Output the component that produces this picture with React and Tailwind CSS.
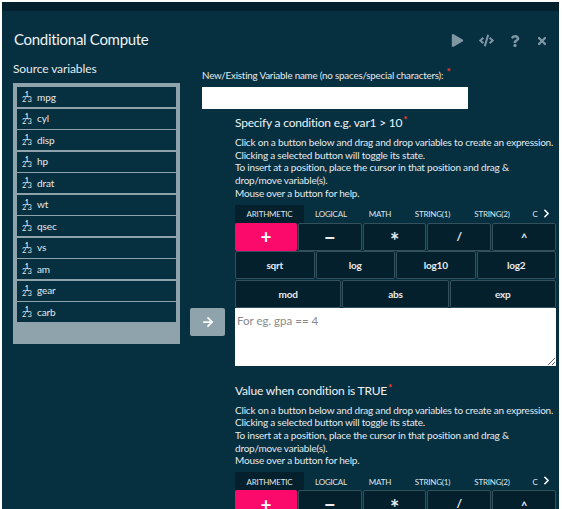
import { ArrowRight, ChevronRight } from "lucide-react";
import { FaCode, FaPlay, FaQuestion, FaTimes } from "react-icons/fa";

const variables = ["mpg", "cyl", "disp", "hp", "drat", "wt", "qsec", "vs", "am", "gear", "carb"];
const tabs = [
  ["ARITHMETIC", "w-[69px] bg-[#04202d]"],
  ["LOGICAL", "w-[54px]"],
  ["MATH", "w-[44px]"],
  ["STRING(1)", "w-[61px]"],
  ["STRING(2)", "w-[58px]"],
  ["C", "w-[28px]"],
];
const rows = [
  [
    ["+", "text-[19px]"],
    ["−", "text-[20px]"],
    ["*", "relative top-[4px] text-[22px]"],
    ["/", "text-[12px]"],
    ["^", "relative top-[1px] text-[11px]"],
  ],
  [["sqrt"], ["log"], ["log10"], ["log2"]],
  [["mod"], ["abs"], ["exp"]],
];

const Required = () => <sup className="top-[-4px] ml-[1px] text-[10px] font-bold text-[#ff3b1f]">*</sup>;

// the little 1/2/3 numeric type badge in front of each variable
const NumericIcon = () => (
  <svg width="11" height="12" viewBox="0 0 11 12" className="mr-[4px] shrink-0" fill="#e4eaed">
    <text x="0" y="11" fontSize="7.5">2</text>
    <text x="5.5" y="11" fontSize="7.5">3</text>
    <text x="3" y="5.5" fontSize="6.5" fontWeight="700">1</text>
  </svg>
);

const HelpText = () => (
  <p className="mt-[5px] whitespace-nowrap text-[10px] leading-[12.7px] tracking-[-0.2px] text-[#e4eaed]">
    Click on a button below and drag and drop variables to create an expression.
    <br />
    Clicking a selected button will toggle its state.
    <br />
    To insert at a position, place the cursor in that position and drag &amp;
    <br />
    drop/move variable(s).
    <br />
    Mouse over a button for help.
  </p>
);

const TabBar = () => (
  <div className="relative mt-[5px] flex h-[18px] w-[321px] items-center text-[8px] tracking-[-0.2px] text-[#dfe6ea]">
    {tabs.map(([tab, width]) => (
      <div key={tab} className={"flex h-full shrink-0 items-center justify-center pt-[1px] " + width}>
        {tab}
      </div>
    ))}
    <ChevronRight size={13} strokeWidth={3} className="absolute right-[3px] top-[2px] text-white" />
  </div>
);

const ButtonRows = () => (
  <div className="flex flex-col gap-[0.5px]">
    {rows.map((row, r) => (
      <div key={r} className="flex h-[28px] gap-[1px]">
        {row.map(([label, size]) => (
          <button
            key={label}
            className={
              label === "+"
                ? "flex-1 rounded-[2px] bg-[#fb0a6b] font-bold leading-none text-white"
                : "flex-1 rounded-[2px] border border-[#34505d] bg-[#04202d] text-[10px] font-bold leading-none tracking-[-0.2px] text-[#e6ecef]"
            }
          >
            <span className={size}>{label}</span>
          </button>
        ))}
      </div>
    ))}
  </div>
);

export default function App() {
  return (
    <div className="h-[509px] w-[562px] overflow-hidden bg-white pl-[2px] pr-[3px] pt-[2px] font-['Lato',sans-serif] text-white">
      <div className="h-full bg-[#062f40]">
        <div className="h-[9px] bg-[#04202d]" />

        <div className="flex h-[38px] items-end justify-between pl-[12px] pr-[11px]">
          <h1 className="text-[15px] leading-[20px] tracking-[-0.3px] text-[#eef2f4]">Conditional Compute</h1>
          <div className="mb-[1px] flex items-center gap-[15px] text-[#7e97a3]">
            <FaPlay size={13} />
            <FaCode size={15} />
            <FaQuestion size={12} />
            <FaTimes size={12} />
          </div>
        </div>

        <div className="flex">
          {/* source variables */}
          <div className="ml-[11px] mt-[12px] w-[167px] shrink-0">
            <h2 className="text-[12px] leading-[16px] tracking-[-0.1px] text-[#e4eaed]">Source variables</h2>
            <div className="mt-[6px] flex h-[261px] flex-col gap-[1.5px] bg-[#8fa3ac] p-[4px]">
              {variables.map((name) => (
                <div
                  key={name}
                  className="flex h-[20px] shrink-0 items-center bg-[#062f40] pl-[5px] text-[10px] tracking-[-0.1px] text-[#e4eaed]"
                >
                  <NumericIcon />
                  {name}
                </div>
              ))}
            </div>
          </div>

          {/* move arrow */}
          <div className="ml-[10px] mt-[259px] flex h-[28px] w-[35px] shrink-0 items-center justify-center self-start rounded-[2px] bg-[#8fa3ac]">
            <ArrowRight size={14} strokeWidth={3} className="text-white" />
          </div>

          <div className="-ml-[23px] mt-[20px] flex-1">
            <label className="block whitespace-nowrap text-[9.8px] leading-[13px] tracking-[-0.2px] text-[#e4eaed]">
              New/Existing Variable name (no spaces/special characters): <Required />
            </label>
            <input className="mt-[5px] block h-[22px] w-[266px] bg-white" />

            <div className="ml-[33px] mt-[6px] w-[321px]">
              <h3 className="text-[12px] leading-[16px] tracking-[-0.2px] text-[#eef2f4]">
                Specify a condition e.g. var1 &gt; 10<Required />
              </h3>
              <HelpText />
              <TabBar />
              <ButtonRows />
              <textarea
                placeholder="For eg. gpa == 4"
                className="block h-[58px] w-full bg-white px-[2px] py-[4px] text-[11.5px] text-black placeholder:text-[#8a8a8a]"
              />

              <h3 className="mt-[17px] text-[12px] leading-[16px] tracking-[-0.2px] text-[#eef2f4]">
                Value when condition is TRUE<Required />
              </h3>
              <HelpText />
              <TabBar />
              <ButtonRows />
            </div>
          </div>
        </div>
      </div>
    </div>
  );
}
